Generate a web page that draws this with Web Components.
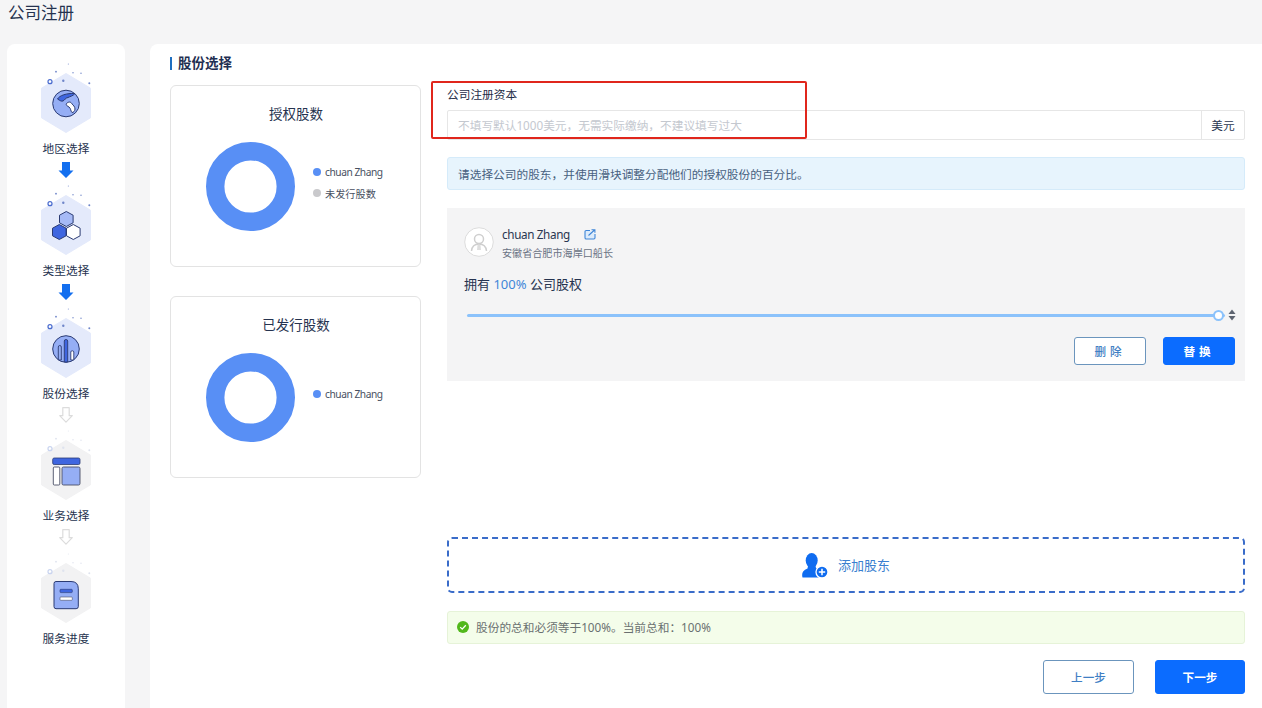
<!DOCTYPE html>
<html lang="zh"><head><meta charset="utf-8"><title>公司注册</title>
<style>
html,body{margin:0;height:708px;overflow:hidden;background:#f5f5f6;font-family:"Noto Sans","Noto Sans CJK SC",sans-serif;color:#1f2c47}
</style></head><body>
<company-app>
  <span slot="title">公司注册</span>
  <reg-sidebar slot="side">
    <reg-step icon="globe" state="active" arrow="done">地区选择</reg-step>
    <reg-step icon="hex" state="active" arrow="done">类型选择</reg-step>
    <reg-step icon="bars" state="active" arrow="todo">股份选择</reg-step>
    <reg-step icon="layout" arrow="todo">业务选择</reg-step>
    <reg-step icon="doc">服务进度</reg-step>
  </reg-sidebar>
  <share-form slot="main"></share-form>
</company-app>
<script>
function def(name, html, init){
  customElements.define(name, class extends HTMLElement{
    constructor(){super();this.attachShadow({mode:'open'}).innerHTML=typeof html==='function'?html(this):html;}
    connectedCallback(){
      if(typeof html==='function'&&!this._d){this._d=1;this.shadowRoot.innerHTML=html(this);}
      if(init)init(this);
    }
  });
}
const S='#2b3b73',A='#95aef5',B='#3f66e0';
const hx=(cx,cy,f)=>`<path d="M${cx} ${cy-7.5}l6.800 3.700v7.600l-6.800 3.700-6.800-3.700v-7.600z" fill="${f}" stroke="${S}" stroke-width="1" stroke-linejoin="round"/>`;
const icons={
 globe:`<circle cx="33" cy="37.500" r="13.300" fill="${A}" stroke="${S}" stroke-width="1"/>
  <path d="M24.500 33c2-3.500 9-6 17.500-5.500-2 2.500-5 3-7 4-3 .5-3 2.500-5 3.500-2 .5-3-.5-5.500-2z" fill="${B}" stroke="${S}" stroke-width="1" stroke-linejoin="round"/>
  <path d="M33.500 37.500c2-2 4.500-2 5.500.5 1 1 3 2.500 3 5 0 2-1.500 3.500-3 3.500-1.500-1.500-1-4-3-5.500-1.500-1-3.500-1.500-2.500-3.500z" fill="#fff" stroke="${S}" stroke-width="1" stroke-linejoin="round"/>`,
 hex:hx(33.3,31,'#a6baf6')+hx(26.3,44,B)+hx(40.3,44,'#fff'),
 bars:`<circle cx="33" cy="38" r="13.300" fill="${A}" stroke="${S}" stroke-width="1"/>
  <path d="M25.300 49V36q0-1.500 1.500-1.500t1.500 1.500v13z" fill="${A}" stroke="${S}" stroke-width=".9"/>
  <path d="M31.300 51V30q0-1.500 1.700-1.500t1.700 1.500v21z" fill="${B}" stroke="${S}" stroke-width=".9"/>
  <path d="M37.800 49V41q0-1.200 1.500-1.200t1.500 1.200v8z" fill="#fff" stroke="${S}" stroke-width=".9"/>`,
 layout:`<rect x="19.700" y="25" width="27.300" height="6.500" rx="1.500" fill="${B}" stroke="${S}" stroke-width=".8"/>
  <rect x="20.300" y="34" width="6.500" height="18" rx="1" fill="#fff" stroke="#4a4f66" stroke-width=".9"/>
  <rect x="29" y="34" width="18" height="18" rx="1.500" fill="${A}" stroke="#4a4f66" stroke-width=".9"/>`,
 doc:`<path d="M23 25.500h15q7.300 0 7.300 7.300V50.500q0 2.200-2.200 2.200H23q-2 0-2-2.200V27.500q0-2 2-2z" fill="${A}" stroke="${S}" stroke-width="1"/>
  <rect x="27" y="33.300" width="12.300" height="3.300" rx=".8" fill="${B}" stroke="${S}" stroke-width=".6"/>
  <rect x="27" y="41" width="12.300" height="3.300" rx=".8" fill="#fff" stroke="#4a4f66" stroke-width=".6"/>`
};
def('company-app',`<style>
:host{display:flex;flex-direction:column;height:708px}
.title{height:44px;box-sizing:border-box;padding:2px 0 0 8px;font-size:16.500px;line-height:22px;color:#25324f;flex:none}
.row{flex:1;display:flex;gap:25px;padding-left:7px;min-height:0}
::slotted([slot=main]){flex:1;min-width:0}
</style><div class="title"><slot name="title"></slot></div><div class="row"><slot name="side"></slot><slot name="main"></slot></div>`);

def('reg-sidebar',`<style>:host{display:flex;flex-direction:column;align-items:center;width:118px;flex:none;box-sizing:border-box;padding-top:21.500px;background:#fff;border-radius:8px 8px 0 0}</style><slot></slot>`);

def('reg-step',el=>{
  const active=el.getAttribute('state')==='active',icon=el.getAttribute('icon'),arrow=el.getAttribute('arrow');
  const hex=active?'#e4eafb':'#f2f2f3',dot=active?'#6f86c9':'#dfe3ee',ring=active?'#4a6ccf':'#c9d4ef';
  const ar=arrow==='done'?`<svg class="arrow" viewBox="0 0 16 16" width="16" height="16"><path d="M4 0h8v8.500h3.500L8 16 .5 8.500H4z" fill="#136fef"/></svg>`
   :arrow==='todo'?`<svg class="arrow" viewBox="0 0 16 16" width="16" height="16"><path d="M4.800.7h6.400v8h3.100L8 15.200 1.700 8.700h3.100z" fill="#fff" stroke="#dcdcdc" stroke-width="1.200" stroke-linejoin="round"/></svg>`:'';
  return `<style>
  :host{display:flex;flex-direction:column;align-items:center;height:122.500px;flex:none}
  svg{display:block;overflow:visible}
  .lab{margin-top:4px;font-size:11.700px;line-height:16px;color:#26334f;white-space:nowrap}
  .arrow{margin-top:6px}
  </style>
  <svg viewBox="0 0 66 70" width="66" height="70">
   <path d="M33 7.500l24.500 14.700v29.600L33 66.500 8.500 51.800V22.200z" fill="${hex}" stroke="${hex}" stroke-width="1" stroke-linejoin="round"/>
   <circle cx="17" cy="15.700" r="2" fill="none" stroke="${ring}" stroke-width="1.200"/>
   <g fill="${dot}"><circle cx="30.300" cy="14.700" r="1.200"/><circle cx="23" cy="5.700" r=".9"/><circle cx="35.300" cy="-2" r=".5"/><circle cx="40" cy="6.700" r=".7"/><circle cx="48" cy="7.300" r=".7"/><circle cx="56.300" cy="17.300" r="1"/></g>
   ${icons[icon]}
  </svg>
  <div class="lab"><slot></slot></div>${ar}`;
});

def('section-title',`<style>:host{display:flex;align-items:center;gap:6px;height:16px;font-size:13.500px;font-weight:700;color:#1f2f52;line-height:16px}
i{display:block;width:2px;height:13px;background:#1f6fc0}</style><i></i><slot></slot>`);

def('chart-card',el=>`<style>
:host{display:block;box-sizing:border-box;height:181.500px;border:1px solid #e3e3e3;border-radius:6px;background:#fff;padding-top:18px}
.t{text-align:center;font-size:13.500px;line-height:20px;color:#26334f;padding-left:1px}
.r{display:flex;align-items:center;margin:17.500px 0 0 35px;gap:18px}
.l{display:flex;flex-direction:column;gap:4px;margin-bottom:7px}
svg{display:block;flex:none}
</style><div class="t">${el.getAttribute('heading')||''}</div><div class="r">
<svg width="89" height="89" viewBox="0 0 89 89"><circle cx="44.500" cy="44.500" r="35.300" fill="none" stroke="#588ff5" stroke-width="18.400"/></svg>
<div class="l"><slot></slot></div></div>`);

def('legend-item',el=>`<style>:host{display:flex;align-items:center;gap:4px;height:17px;font-size:10.200px;letter-spacing:${el.getAttribute('ls')||0}px;color:#48505f;white-space:nowrap}
i{display:block;width:8px;height:8px;border-radius:50%;background:${el.getAttribute('color')}}</style><i></i><slot></slot>`);

def('reg-button',el=>{
 const p=el.hasAttribute('primary');
 return `<style>:host{display:inline-flex;align-items:center;justify-content:center;box-sizing:border-box;width:${el.getAttribute('w')}px;height:${el.getAttribute('h')}px;border-radius:3px;font-size:11.600px;font-weight:${p?700:500};letter-spacing:${el.getAttribute('ls')||0}px;
 background:${p?'#0b6cff':'#fff'};color:${p?'#fff':'#3f7fc4'};border:1px solid ${p?'#0b6cff':'#6b95bd'}}</style><slot></slot>`});

def('share-slider',`<style>
:host{display:flex;align-items:center;height:12px;margin-left:3px;gap:3px}
.t{flex:1;height:3px;border-radius:2px;background:#8bc2fb;position:relative}
.h{position:absolute;right:1px;top:-4px;width:11px;height:11px;box-sizing:border-box;border-radius:50%;background:#fff;border:2px solid #8bc2fb}
svg{display:block;flex:none;margin-right:-1px}
</style><div class="t"><div class="h"></div></div>
<svg width="8" height="12" viewBox="0 0 8 12"><path d="M4 .5L7.500 5H.5z" fill="#5d6470"/><path d="M4 11.500L.5 7h7z" fill="#5d6470"/></svg>`);

def('share-holder',`<style>
:host{display:block;height:173px;box-sizing:border-box;background:#f4f4f5;padding:18px 10px 16px 17px}
.top{display:flex;gap:8px;align-items:flex-start}
.av{display:block;margin-top:1px;flex:none}
.n{font-size:11.700px;line-height:16px;color:#2a3650;display:flex;align-items:center;gap:14px}
.n span{letter-spacing:-.35px}
.s{font-size:10.100px;line-height:16px;margin-top:3px;color:#6a7284}
.own{margin-top:14px;font-size:13px;line-height:18px;color:#26334f}
.own b{font-weight:400;color:#3f86d8}
share-slider{margin-top:16px}
.btn{display:flex;justify-content:flex-end;gap:17px;margin-top:16px}
</style>
<div class="top">
<svg class="av" width="30" height="30" viewBox="0 0 30 30"><circle cx="15" cy="15" r="14.300" fill="#fff" stroke="#dcdcdc"/><circle cx="15" cy="12" r="4.500" fill="none" stroke="#cfcfcf" stroke-width="1.500"/><path d="M7.500 24c.5-5 3.500-7 7.500-7s7 2 7.500 7" fill="none" stroke="#cfcfcf" stroke-width="1.500"/><path d="M13.500 18h3l.5 5h-4z" fill="#dedede"/></svg>
<div><div class="n"><span>chuan Zhang</span><svg width="12" height="11" viewBox="0 0 12 11"><path d="M6 1.500H2.200Q1 1.500 1 2.700v6Q1 10 2.200 10h7.600Q11 10 11 8.800V5" fill="#dcebfb" stroke="#3f86d8" stroke-width="1.100"/><path d="M4.500 6.500L10.500 1M7.500.8h3.400v3" fill="none" stroke="#3f86d8" stroke-width="1.100"/></svg></div>
<div class="s">安徽省合肥市海岸口船长</div></div></div>
<div class="own">拥有 <b>100%</b> 公司股权</div>
<share-slider></share-slider>
<div class="btn"><reg-button w="72" h="28" ls="4">删除</reg-button><reg-button w="72" h="28" ls="4" primary>替换</reg-button></div>`);

def('notice-box',el=>{
 const ok=el.getAttribute('type')==='success';
 return `<style>:host{display:flex;align-items:center;gap:7px;box-sizing:border-box;height:33px;padding:0 0 ${ok?2:1}px ${ok?9:10}px;border-radius:3px;font-size:11.700px;
 background:${ok?'#f4fdea':'#e7f4fd'};border:1px solid ${ok?'#e6f3d8':'#d5ebfa'};color:${ok?'#6a7070':'#47617f'}}
 svg{display:block;flex:none}</style>${ok?'<svg width="12" height="12" viewBox="0 0 12 12"><circle cx="6" cy="6" r="6" fill="#52b81c"/><path d="M3.200 6.100l2 2 3.600-3.800" fill="none" stroke="#fff" stroke-width="1.300"/></svg>':''}<slot></slot>`});

def('add-holder',`<style>:host{display:flex;align-items:center;justify-content:center;gap:10px;box-sizing:border-box;height:56px;border:2px dashed #3a6cc9;border-radius:5px;font-size:13px;color:#3a7fd0;background:#fff}
svg{display:block}span{padding-bottom:1px}</style>
<svg width="26" height="25" viewBox="0 0 26 25"><ellipse cx="9.700" cy="7.500" rx="6" ry="7.500" fill="#0f6cf0"/><path d="M6 13h7.500l.5 2c3 1 5 2 5 4v5.500H.5c-1-4 0-7 5-9z" fill="#0f6cf0"/><circle cx="20" cy="19" r="6" fill="#0f6cf0" stroke="#fff" stroke-width="1.300"/><path d="M20 15.800v6.400M16.800 19h6.400" stroke="#fff" stroke-width="1.500"/></svg><span><slot></slot></span>`);

def('capital-input',`<style>
:host{display:flex;height:30px;box-sizing:border-box;border:1px solid #e6e6e6;border-radius:2px;background:#fff;font-size:11.700px}
.i{flex:1;display:flex;align-items:center;padding:0 0 1px 10px;color:#c4c8cf}
.a{width:42px;border-left:1px solid #e6e6e6;display:flex;align-items:center;justify-content:center;color:#2a3650;padding-bottom:1px}
</style><div class="i"><slot></slot></div><div class="a">美元</div>`);

def('share-form',`<style>
:host{display:flex;flex-direction:column;box-sizing:border-box;height:664px;background:#fff;border-radius:8px 0 0 0;padding:11px 17px 14px 20px}
.g{display:flex;gap:26px;margin-top:14px;flex:1;min-height:0}
.left{width:251px;flex:none;display:flex;flex-direction:column;gap:29.500px}
.right{flex:1;min-width:0;display:flex;flex-direction:column;position:relative}
.lab{font-size:11.700px;line-height:16px;margin-top:1px;color:#1f2c47}
capital-input{margin-top:8px}
notice-box[type=info]{margin-top:17px}
share-holder{margin-top:18px}
.sp{flex:1}
notice-box[type=success]{margin-top:18px}
.nav{display:flex;justify-content:flex-end;gap:21px;margin-top:16px}
.mark{position:absolute;left:-16px;top:-4px;width:376px;height:58px;box-sizing:border-box;border:2px solid #e0261c;border-radius:2px}
</style>
<section-title>股份选择</section-title>
<div class="g">
 <div class="left">
  <chart-card heading="授权股数"><legend-item color="#588ff5" ls="-.45">chuan Zhang</legend-item><legend-item color="#c9c9cc">未发行股数</legend-item></chart-card>
  <chart-card heading="已发行股数"><legend-item color="#588ff5" ls="-.45">chuan Zhang</legend-item></chart-card>
 </div>
 <div class="right">
  <div class="lab">公司注册资本</div>
  <capital-input>不填写默认1000美元，无需实际缴纳，不建议填写过大</capital-input>
  <notice-box type="info">请选择公司的股东，并使用滑块调整分配他们的授权股份的百分比。</notice-box>
  <share-holder></share-holder>
  <div class="sp"></div>
  <add-holder>添加股东</add-holder>
  <notice-box type="success">股份的总和必须等于100%。当前总和：100%</notice-box>
  <div class="nav"><reg-button w="91" h="34">上一步</reg-button><reg-button w="90" h="34" primary>下一步</reg-button></div>
  <div class="mark"></div>
 </div>
</div>`);
</script>
</body></html>
